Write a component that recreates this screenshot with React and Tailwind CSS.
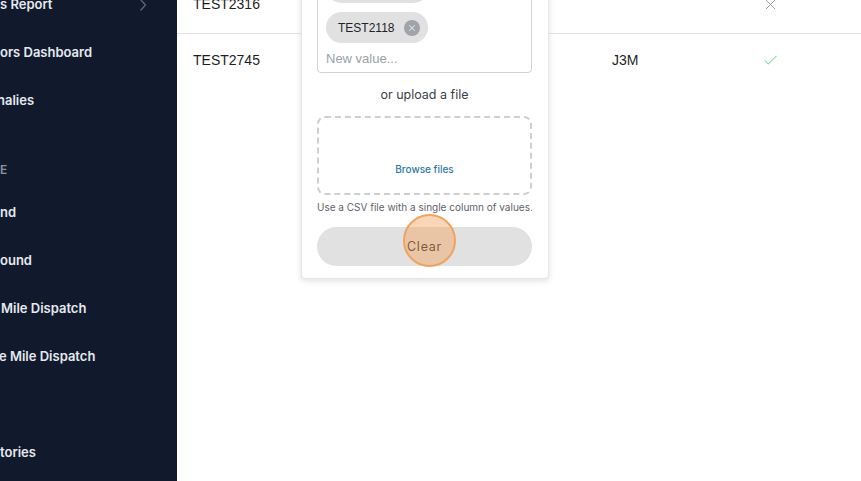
import { X, Check } from "lucide-react";

const NAV = [
  { label: "s Report", shift: "ml-0", chevron: true },
  { label: "ors Dashboard", shift: "ml-0" },
  { label: "nalies", shift: "ml-[-3px]" },
  { section: "E" },
  { label: "nd", shift: "ml-0" },
  { label: "ound", shift: "ml-0" },
  { label: "Mile Dispatch", shift: "ml-[1px]" },
  { label: "e Mile Dispatch", shift: "ml-[-1px]" },
  { label: "", shift: "ml-0" },
  { label: "tories", shift: "ml-0" },
];

function Sidebar() {
  return (
    <div className="w-[177px] shrink-0 bg-[#111a2c] overflow-hidden" style={{ fontFamily: "Inter, 'Noto Sans', sans-serif" }}>
      <div className="mt-[-19px]">
        {NAV.map((n, i) =>
          n.section ? (
            <div key={i} className="h-[64px] pt-[37px] text-[12px] leading-4 font-semibold text-[#8b93a3]">
              {n.section}
            </div>
          ) : (
            <div key={i} className="h-[48px] flex items-center pr-[30px]">
              <span className={`flex-1 text-[13px] font-semibold text-[#e7e9ee] whitespace-nowrap ${n.shift}`}>{n.label}</span>
              {n.chevron && (
                <svg width="8" height="14" viewBox="0 0 8 14" fill="none" className="shrink-0">
                  <path d="M1.5 1.5 L6.5 7 L1.5 12.5" stroke="#5b6474" strokeWidth="1.4" />
                </svg>
              )}
            </div>
          )
        )}
      </div>
    </div>
  );
}

function Chip({ text }) {
  return (
    <div className="self-start flex items-center gap-[10px] h-[31px] pl-[12px] pr-[8px] rounded-full bg-[#e1e1e1] text-[12px] text-[#1f2328]" style={{ fontFamily: "'Liberation Sans', Arial, sans-serif" }}>
      <span>{text}</span>
      <span className="w-[16px] h-[16px] rounded-full bg-[#9fa3aa] flex items-center justify-center">
        <X size={10} strokeWidth={2.5} className="text-[#e1e1e1]" />
      </span>
    </div>
  );
}

function Popup() {
  return (
    <div className="absolute left-[124px] bottom-[202px] w-[248px] bg-white border border-[#e6e6e6] rounded-[4px] shadow-[0_2px_6px_rgba(0,0,0,0.12)] pl-[15px] pr-[16px] pb-[12px]" style={{ fontFamily: "Inter, 'Noto Sans', sans-serif" }}>
      <div className="border border-[#cfd3d8] rounded-[4px] pl-[8px] pr-[8px] pt-[8px] pb-[5px] flex flex-col gap-[9px]">
        <Chip text="TEST2087" />
        <Chip text="TEST2101" />
        <Chip text="TEST2118" />
        <div className="h-[16px] -mt-px text-[13px] leading-4 text-[#9aa1ab]" style={{ fontFamily: "'Liberation Sans', Arial, sans-serif" }}>New value...</div>
      </div>
      <div className="mt-[13px] text-center text-[12.5px] leading-[18px] text-[#3a3f47]">or upload a file</div>
      <div className="mt-[12px] h-[79px] border-2 border-dashed border-[#cfcfcf] rounded-[8px] flex items-end justify-center pb-[16px]">
        <span className="text-[10px] font-medium text-[#2a79ad]">Browse files</span>
      </div>
      <div className="mt-[5px] text-center text-[10px] leading-[14px] text-[#5d636c] whitespace-nowrap">Use a CSV file with a single column of values.</div>
      <div className="relative mt-[13px] h-[39px] rounded-full bg-[#e1e1e1] flex items-center justify-center">
        <span className="text-[12.5px] tracking-[0.06em] text-[#1e1812] pt-[1px]">Clear</span>
        <div className="absolute left-[86px] top-[-13px] w-[53px] h-[53px] rounded-full bg-[#f4a460]/45 border-2 border-[#f0a35e]" />
      </div>
    </div>
  );
}

export default function App() {
  return (
    <div className="w-[861px] h-[481px] flex overflow-hidden bg-white">
      <Sidebar />
      <div className="relative flex-1 overflow-hidden" style={{ fontFamily: "'Liberation Sans', Arial, sans-serif" }}>
        <div className="mt-[-24px]">
          <div className="h-[58px] flex items-center border-b border-[#e3e3e3] text-[14px] text-[#1e1e1e]">
            <span className="w-[435px] pl-[16px]">TEST2316</span>
            <span className="w-[150px]"></span>
            <X size={17} strokeWidth={1.2} className="text-[#8b8f96]" />
          </div>
          <div className="h-[52px] flex items-center text-[14px] text-[#1e1e1e]">
            <span className="w-[435px] pl-[16px]">TEST2745</span>
            <span className="w-[150px]">J3M</span>
            <Check size={17} strokeWidth={1.3} className="text-[#4cc777]" />
          </div>
        </div>
        <Popup />
      </div>
    </div>
  );
}
